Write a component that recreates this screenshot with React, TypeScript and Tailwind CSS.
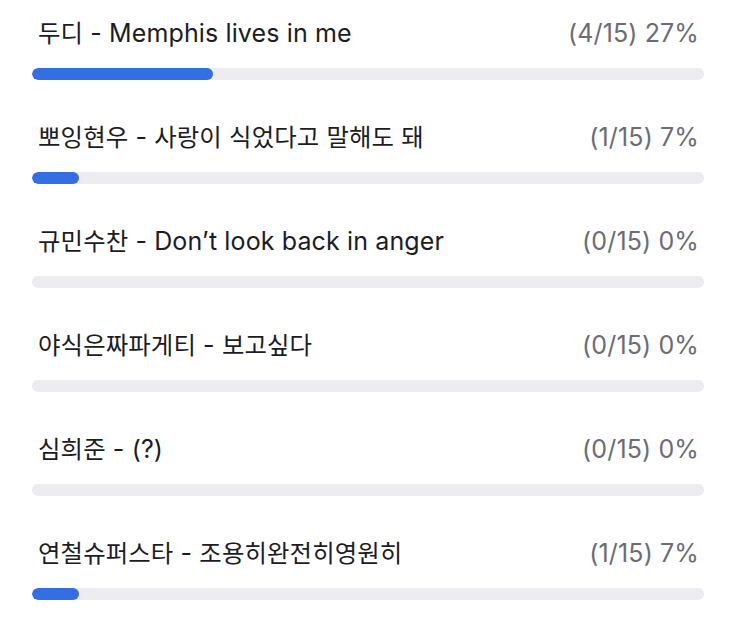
const rows = [
  { label: "두디 - Memphis lives in me", votes: 4 },
  { label: "뽀잉현우 - 사랑이 식었다고 말해도 돼", votes: 1 },
  { label: "규민수찬 - Don’t look back in anger", votes: 0 },
  { label: "야식은짜파게티 - 보고싶다", votes: 0 },
  { label: "심희준 - (?)", votes: 0 },
  { label: "연철슈퍼스타 - 조용히완전히영원히", votes: 1 },
];
const total = 15;

// hangul runs are set a touch smaller so their width matches the original
function Label({ text }: { text: string }) {
  const parts = text.split(/([\uAC00-\uD7A3]+)/).filter(Boolean);
  return (
    <span className="text-[#1c1c24]">
      {parts.map((p, i) =>
        /[\uAC00-\uD7A3]/.test(p) ? (
          <span key={i} className="text-[24.4px]">{p}</span>
        ) : (
          <span key={i}>{p}</span>
        )
      )}
    </span>
  );
}

export default function App() {
  return (
    <div
      className="w-[752px] h-[618px] bg-white pl-[32px] pr-[48px] pt-[18px]"
      style={{ fontFamily: 'Inter, "Noto Sans CJK KR", sans-serif' }}
    >
      {rows.map((r, i) => {
        const pct = Math.round((r.votes / total) * 100);
        return (
          <div key={i} className="h-[104px]">
            <div className="flex items-center justify-between pl-[6px] pr-[5px] h-[30px] text-[25px] leading-[30px] tracking-[0.005em]">
              <Label text={r.label} />
              <span className="text-[#6c6c74]">
                ({r.votes}/{total}) {pct}%
              </span>
            </div>
            <div className="mt-[20px] h-[12px] w-full rounded-full bg-[#ededf1] overflow-hidden">
              <div className="h-full rounded-full bg-[#316fe3]" style={{ width: `${pct}%` }} />
            </div>
          </div>
        );
      })}
    </div>
  );
}
